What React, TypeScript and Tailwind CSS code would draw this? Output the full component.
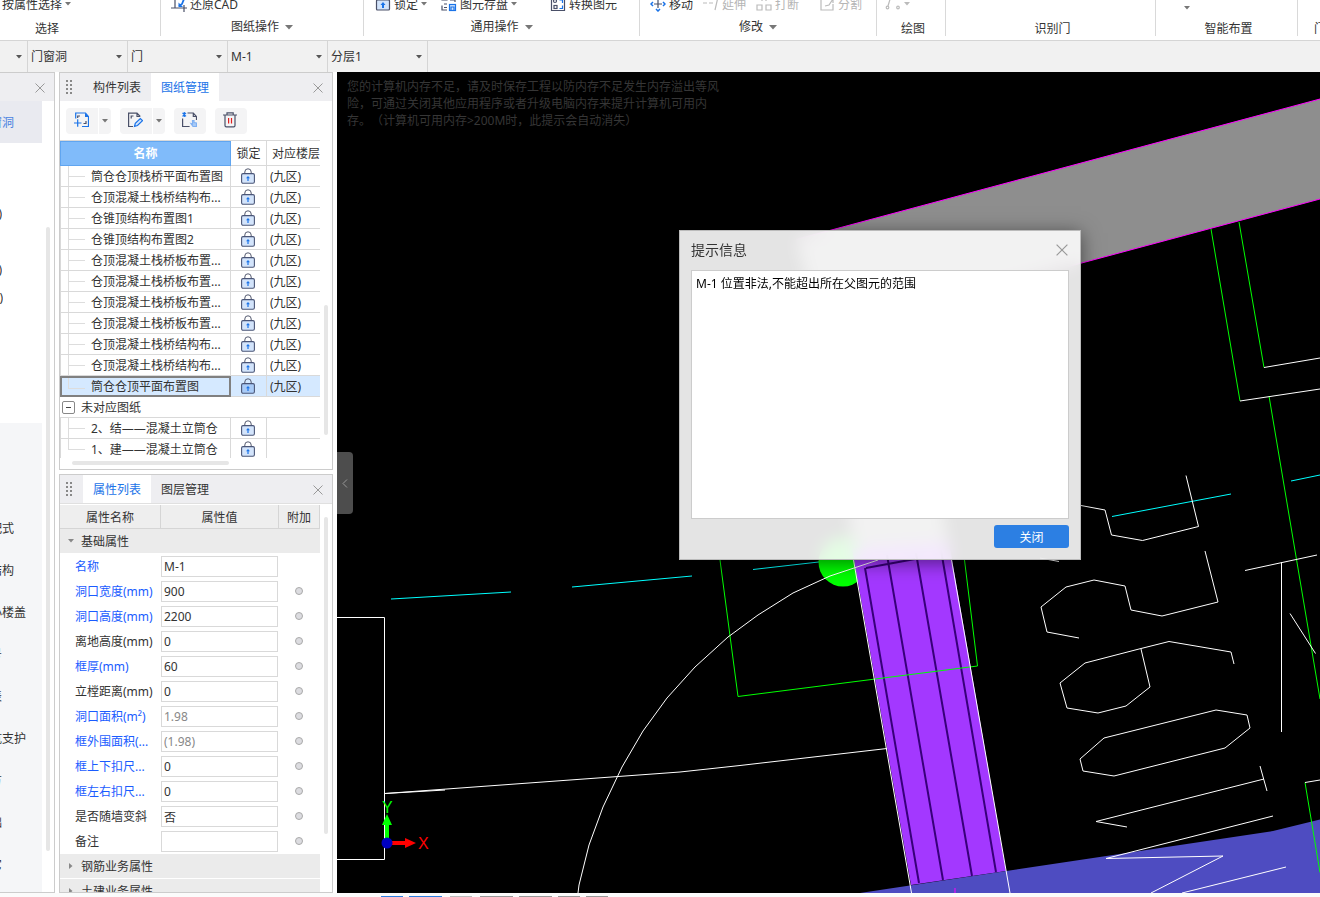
import type { ReactNode } from 'react'

const drawings = [
  { name: '筒仓仓顶栈桥平面布置图' },
  { name: '仓顶混凝土栈桥结构布...' },
  { name: '仓锥顶结构布置图1' },
  { name: '仓锥顶结构布置图2' },
  { name: '仓顶混凝土栈桥板布置...' },
  { name: '仓顶混凝土栈桥板布置...' },
  { name: '仓顶混凝土栈桥板布置...' },
  { name: '仓顶混凝土栈桥板布置...' },
  { name: '仓顶混凝土栈桥结构布...' },
  { name: '仓顶混凝土栈桥结构布...' },
  { name: '筒仓仓顶平面布置图', selected: true, last: true },
]

const unmatched = [
  { name: '2、结——混凝土立筒仓' },
  { name: '1、建——混凝土立筒仓', last: true },
]

const properties = [
  { label: '名称', value: 'M-1', blue: true, noExtra: true },
  { label: '洞口宽度(mm)', value: '900', blue: true },
  { label: '洞口高度(mm)', value: '2200', blue: true },
  { label: '离地高度(mm)', value: '0' },
  { label: '框厚(mm)', value: '60', blue: true },
  { label: '立樘距离(mm)', value: '0' },
  { label: '洞口面积(m²)', value: '1.98', blue: true, readOnly: true },
  { label: '框外围面积(...', value: '(1.98)', blue: true, readOnly: true },
  { label: '框上下扣尺...', value: '0', blue: true },
  { label: '框左右扣尺...', value: '0', blue: true },
  { label: '是否随墙变斜', value: '否' },
  { label: '备注', value: '' },
]

const navGroups = [
  { label: '装配式', width: 'w-3.5' },
  { label: '结构', width: 'w-3.5' },
  { label: '小楼盖', width: 'w-6.5' },
  { label: '号', width: 'w-0.5' },
  { label: '表', width: 'w-0.5' },
  { label: '坑支护', width: 'w-6.5' },
  { label: '方', width: 'w-0.5' },
  { label: '础', width: 'w-0.5' },
  { label: '它', width: 'w-0.5' },
]

function Caret({ className = 'text-[#777]' }: { className?: string }) {
  return (
    <svg width="6" height="4" viewBox="0 0 6 4" className={`shrink-0 ${className}`}>
      <path d="M0 0h6L3 3.5z" fill="currentColor" />
    </svg>
  )
}

function CloseIcon({ size = 10 }: { size?: number }) {
  return (
    <svg width={size} height={size} viewBox="0 0 10 10" fill="none" stroke="#999">
      <path d="M.5.5l9 9M9.5.5l-9 9" />
    </svg>
  )
}

function Grip() {
  return (
    <svg width="7" height="15" viewBox="0 0 7 15" fill="#888" className="mx-[6px] shrink-0">
      {[0, 4, 8, 12].map((y) => (
        <g key={y}>
          <rect x="0" y={y} width="2" height="2" />
          <rect x="4" y={y} width="2" height="2" />
        </g>
      ))}
    </svg>
  )
}

function LockIcon({ tint = '#d3e4fb' }: { tint?: string }) {
  return (
    <svg width="14" height="16" viewBox="0 0 14 16" fill="none" className="ml-2.5 block">
      <path d="M3.8 5.5V4a3.2 3.2 0 0 1 6.4 0v1.5" stroke="#555b70" />
      <rect x=".6" y="5.6" width="12.8" height="9.6" rx="1.4" fill={tint} stroke="#4a5577" strokeWidth="1.1" />
      <path d="M7 8l2 2.2H7.6V13H6.4v-2.8H5z" fill="#1a73e8" />
    </svg>
  )
}

function Icon({ children, muted }: { children: ReactNode; muted?: boolean }) {
  return (
    <svg
      width="16"
      height="16"
      viewBox="0 0 16 16"
      fill="none"
      stroke={muted ? '#bbb' : '#4a5068'}
      strokeWidth="1.2"
      className="shrink-0"
    >
      {children}
    </svg>
  )
}

function Tool({
  icon,
  label,
  caret,
  muted,
}: {
  icon?: ReactNode
  label?: string
  caret?: boolean
  muted?: boolean
}) {
  return (
    <button
      type="button"
      className={`flex h-6 shrink-0 items-center gap-[3px] whitespace-nowrap ${muted ? 'text-[#b5b5b5]' : ''}`}
    >
      {icon && <Icon muted={muted}>{icon}</Icon>}
      {label && <span className="pt-px">{label}</span>}
      {caret && <Caret className={muted ? 'text-[#bbb]' : 'text-[#777]'} />}
    </button>
  )
}

function RibbonGroup({
  title,
  menu,
  className,
  titleClass = '',
  children,
}: {
  title: string
  menu?: boolean
  className: string
  titleClass?: string
  children?: ReactNode
}) {
  return (
    <section className={`flex h-9 shrink-0 flex-col justify-end overflow-hidden border-r border-[#d9d9d9] ${className}`}>
      <div className="flex h-6 shrink-0 items-center">{children}</div>
      <div
        className={`flex h-5 shrink-0 items-center justify-center gap-1.5 whitespace-nowrap ${
          menu ? 'pt-0.5' : 'pt-1.5'
        } ${titleClass}`}
      >
        {title}
        {menu && (
          <svg width="8" height="5" viewBox="0 0 8 5" fill="#777">
            <path d="M0 0h8L4 4.5z" />
          </svg>
        )}
      </div>
    </section>
  )
}

function Ribbon() {
  return (
    <header className="flex h-[41px] shrink-0 overflow-hidden border-b border-[#d5d5d5] bg-white">
      <RibbonGroup title="选择" className="w-[161px] pl-0.5" titleClass="pr-[68px]">
        <Tool label="按属性选择" caret />
      </RibbonGroup>
      <RibbonGroup title="图纸操作" menu className="w-[203px] [&>div:first-child]:pl-2.5">
        <Tool
          label="还原CAD"
          icon={
            <>
              <path d="M4 0v12h12M0 12h4M13 9v7" />
              <path d="M8 10l3-2 2-5" stroke="#1a73e8" strokeWidth="1.8" />
              <path d="M7.500 6.500V11H12z" fill="#1a73e8" stroke="none" />
            </>
          }
        />
      </RibbonGroup>
      <RibbonGroup title="通用操作" menu className="w-[276px] [&>div:first-child]:pl-[11px]">
        <Tool
          label="锁定"
          caret
          icon={
            <>
              <rect x="1.500" y="4" width="13" height="10" rx="1" fill="#d3e4fb" />
              <path d="M8 6l2.500 3H9v3H7V9H5.500z" fill="#1a73e8" stroke="none" />
            </>
          }
        />
        <div className="w-3.5" />
        <Tool
          label="图元存盘"
          caret
          icon={
            <>
              <path d="M1 0v4h5V0M3 8h3M1 9.500V14h5M3 11.500h3M9 4h5v2" />
              <rect x="8.500" y="8.500" width="6" height="6" fill="#d3e4fb" stroke="#1a73e8" />
              <path d="M10 14v-3h3v3" stroke="#1a73e8" />
            </>
          }
        />
        <div className="w-[33px]" />
        <Tool
          label="转换图元"
          icon={
            <>
              <path d="M1.500 0v14.500h13V0" />
              <circle cx="5" cy="5" r="1.500" />
              <rect x="4" y="9.500" width="3" height="3" />
              <path d="M9.500 4h3v3M12.500 9.500v3h-3" stroke="#1a73e8" />
            </>
          }
        />
      </RibbonGroup>
      <RibbonGroup title="修改" menu className="w-[237px] [&>div:first-child]:pl-2.5">
        <Tool
          label="移动"
          icon={
            <>
              <path d="M8 4v8M4 8h8" />
              <path d="M6 3l2-2 2 2M6 13l2 2 2-2M3 6L1 8l2 2M13 6l2 2-2 2" stroke="#1a73e8" strokeWidth="1.500" />
            </>
          }
        />
        <div className="w-2.5" />
        <Tool label="延伸" muted icon={<path d="M0 7h4M6 7h4M15 1l-3 13" />} />
        <div className="w-2.5" />
        <Tool
          label="打断"
          muted
          icon={<path d="M1 2h5M10 2h5M1 9h5v5H1zM10 9h5v5h-5zM6 2v3M10 2v3" />}
        />
        <div className="w-5" />
        <Tool label="分割" muted icon={<path d="M8 3H2v11h12V8M6 10l4-1 4-6M10 3h4v4" />} />
      </RibbonGroup>
      <RibbonGroup title="绘图" className="w-[69px] [&>div:first-child]:pl-2" titleClass="pl-1">
        <Tool
          muted
          caret
          icon={
            <>
              <path d="M6 0L3 10" />
              <circle cx="2.500" cy="11.500" r="1.300" />
              <circle cx="13" cy="11.500" r="1.300" />
            </>
          }
        />
      </RibbonGroup>
      <RibbonGroup title="识别门" className="w-[210px]" titleClass="pl-1" />
      <RibbonGroup title="智能布置" className="w-[142px] [&>div:first-child]:pt-2 [&>div:first-child]:pl-7" titleClass="pl-1">
        <Tool caret />
      </RibbonGroup>
      <RibbonGroup title="门" className="w-12 grow" titleClass="justify-start pl-4" />
    </header>
  )
}

function BarSelect({ label, value, className = 'w-[100px]' }: { label: string; value: string; className?: string }) {
  return (
    <div className={`relative h-full border-r border-[#d5d5d5] ${className}`}>
      <select aria-label={label} className="h-full w-full appearance-none bg-transparent pl-[3px] outline-none">
        <option>{value}</option>
      </select>
      <Caret className="pointer-events-none absolute top-[14px] right-[5px] text-[#555]" />
    </div>
  )
}

function SelectorBar() {
  return (
    <div className="flex h-[31px] shrink-0 items-center bg-[#f1f1f1]">
      <BarSelect label="楼层" value="" className="w-7" />
      <BarSelect label="构件类别" value="门窗洞" />
      <BarSelect label="构件类型" value="门" />
      <BarSelect label="构件" value="M-1" />
      <BarSelect label="分层" value="分层1" />
    </div>
  )
}

function NavPanel() {
  return (
    <nav className="flex w-[55px] shrink-0 flex-col overflow-hidden border border-l-0 border-[#ccc] bg-white">
      <div className="flex h-7 shrink-0 items-center justify-end bg-[#eeeef1] pt-px pr-[9px]">
        <button type="button" aria-label="关闭导航">
          <CloseIcon />
        </button>
      </div>
      <div className="flex min-h-0 flex-1">
        <div className="flex w-[42px] shrink-0 flex-col">
          <a href="#door" className="flex h-[42px] shrink-0 items-center bg-[#e9eaf0] pt-0.5 text-[#4a83e0]">
            <span className="flex w-3.5 justify-end overflow-hidden whitespace-nowrap">门窗洞</span>
          </a>
          <ul className="h-[280px] shrink-0 pt-[57px] text-[#333]">
            {['w-0.5', '', 'w-0.5', 'w-[3px]'].map((w, i) => (
              <li key={i} className="flex h-7 items-center">
                {w && <span className={`flex justify-end overflow-hidden ${w}`}>)</span>}
              </li>
            ))}
          </ul>
          <ul className="flex-1 bg-[#f5f6f8] pt-[85px]">
            {navGroups.map((g) => (
              <li key={g.label} className="flex h-[42px] items-center">
                <a href="#group" className={`flex justify-end overflow-hidden whitespace-nowrap ${g.width}`}>
                  {g.label}
                </a>
              </li>
            ))}
          </ul>
        </div>
        <div className="ml-1 mt-[126px] h-[624px] w-1 rounded-full bg-[#e6e6e6]" />
      </div>
    </nav>
  )
}

function PanelTabs({ tabs, active }: { tabs: string[]; active: number }) {
  return (
    <div className="flex h-7 shrink-0 items-center bg-[#eeeef1]">
      <Grip />
      <div className="flex h-full flex-1 pl-1" role="tablist">
        {tabs.map((t, i) => (
          <button
            key={t}
            type="button"
            role="tab"
            aria-selected={i === active}
            className={`h-full w-[68px] pt-0.5 ${i === active ? 'bg-white text-[#1a73e8]' : ''}`}
          >
            {t}
          </button>
        ))}
      </div>
      <button type="button" aria-label="关闭面板" className="mt-px mr-[9px]">
        <CloseIcon />
      </button>
    </div>
  )
}

function ToolButton({ label, split, children }: { label: string; split?: boolean; children: ReactNode }) {
  return (
    <div className="flex h-[26px] gap-px">
      <button
        type="button"
        aria-label={label}
        className={`flex w-8 items-center justify-center bg-[#f4f4f5] pr-0.5 pb-px ${split ? 'rounded-l' : 'rounded'}`}
      >
        <Icon>{children}</Icon>
      </button>
      {split && (
        <button
          type="button"
          aria-label={`${label}菜单`}
          className="flex w-3 items-center justify-center rounded-r bg-[#f4f4f5]"
        >
          <Caret />
        </button>
      )}
    </div>
  )
}

function DrawingRow({ name, floor, selected, last }: { name: string; floor?: string; selected?: boolean; last?: boolean }) {
  return (
    <tr className={selected ? 'bg-[#d5e9ff]' : ''}>
      <td
        className={`h-[21px] p-0 ${
          selected ? 'border-2 border-[#808080]' : 'border-r border-b border-l border-[#d9d9d9]'
        }`}
      >
        <div
          className={`flex items-center whitespace-nowrap ${selected ? 'h-[17px] pl-1.5 leading-[17px]' : 'h-5 pl-[7px]'}`}
        >
          <span className={`flex w-[17px] shrink-0 flex-col self-stretch ${last ? '' : 'border-l border-[#ddd]'}`}>
            <span className={`h-[11px] border-b border-[#ddd] ${last ? 'border-l' : ''}`} />
          </span>
          <span className={selected ? 'pl-1.5' : 'pt-0.5 pl-1.5'}>{name}</span>
        </div>
      </td>
      <td className="border-r border-b border-[#d9d9d9] px-0 pt-0 pb-px">
        <LockIcon tint={selected ? '#a9cbf7' : '#d3e4fb'} />
      </td>
      <td className="border-b border-[#d9d9d9] pt-0.5 pr-0 pb-0 pl-[3px]">{floor}</td>
    </tr>
  )
}

function DrawingPanel() {
  return (
    <section className="flex h-[398px] shrink-0 flex-col border border-[#ccc] bg-white">
      <PanelTabs tabs={['构件列表', '图纸管理']} active={1} />
      <div className="flex h-[39px] shrink-0 items-center gap-[9px] pl-1.5">
        <ToolButton label="添加图纸" split>
          <path d="M2.700 6.500V1h9.800l3 3.500v10H9M1 11h7.500M4.700 7.300v7.400" stroke="#1a73e8" />
          <path d="M4.700 6V4H7M13 9v2.500h-2.500" />
          <path d="M12 1l4 4h-4z" fill="#1a73e8" stroke="none" />
        </ToolButton>
        <ToolButton label="编辑图纸" split>
          <path d="M6 14.500H1.600V1.200H10l3.200 3.300M4.200 6.500V4h2.300M10 1.200v3.300h3.200" />
          <path d="M7.500 14.300l.8-3 5-4.800 2.200 2.200-5 4.800z" fill="#d3e4fb" stroke="#1a73e8" />
        </ToolButton>
        <ToolButton label="定位图纸">
          <path d="M1.600 6.500v8h7M6.500 1h5.800l3.200 3.500V8M12.300 1v3.500h3.200" />
          <path d="M1.500.800l3.500 3.500M5 .800L1.500 4.300M3.300 0v5" stroke="#1a73e8" />
          <path d="M11.500 8.500v3.500l-1.500-.5 2 3h3.500v-3.500l-2.500-.5v-2z" fill="#a9cbf7" stroke="#7fb0f2" />
        </ToolButton>
        <ToolButton label="删除">
          <path d="M1 3h14M5 3V.800h6.200V3M3 3v10.500q0 1.300 1.300 1.300h7.400q1.300 0 1.300-1.300V3" />
          <path d="M6.600 6v5.500M9.500 6v5.500" stroke="#e02020" />
        </ToolButton>
      </div>
      <div className="flex min-h-0 flex-1">
        <div className="flex w-[260px] shrink-0 flex-col">
          <div className="h-[318px] overflow-hidden border-t border-[#d9d9d9]">
            <table className="w-full table-fixed border-separate border-spacing-0">
              <colgroup>
                <col className="w-[171px]" />
                <col className="w-9" />
                <col />
              </colgroup>
              <thead>
                <tr>
                  <th className="h-[25px] border border-[#60a5f0] bg-[#80bbfa] p-0 text-white">名称</th>
                  <th className="border-r border-b border-[#d9d9d9] px-0 pt-0.5 pb-0 font-normal">锁定</th>
                  <th className="overflow-hidden border-b border-[#d9d9d9] pt-0.5 pr-0 pb-0 pl-[5px] text-left font-normal whitespace-nowrap">
                    对应楼层
                  </th>
                </tr>
              </thead>
              <tbody>
                {drawings.map((d, i) => (
                  <DrawingRow key={i} {...d} floor="(九区)" />
                ))}
                <tr>
                  <td colSpan={3} className="h-[21px] border-b border-[#d9d9d9] p-0">
                    <div className="flex h-5 items-center gap-1.5 pl-0.5">
                      <button
                        type="button"
                        aria-label="折叠"
                        className="flex h-[13px] w-[13px] items-center justify-center rounded-xs border border-[#888] bg-white"
                      >
                        <span className="h-px w-[5px] bg-[#444]" />
                      </button>
                      <span className="pt-0.5">未对应图纸</span>
                    </div>
                  </td>
                </tr>
                {unmatched.map((d) => (
                  <DrawingRow key={d.name} {...d} />
                ))}
              </tbody>
            </table>
          </div>
          <div className="mt-[3px] ml-3 h-1 w-[157px] rounded-full bg-[#e6e6e6]" />
        </div>
        <div className="mt-[165px] ml-1 h-[130px] w-1 rounded-full bg-[#e6e6e6]" />
      </div>
    </section>
  )
}

function GroupHeading({ title, open }: { title: string; open?: boolean }) {
  return (
    <tr>
      <th colSpan={3} className="h-[25px] border-b border-white bg-[#ebebeb] p-0 text-left font-normal">
        <button type="button" className="flex h-6 items-center gap-[7px] pl-2">
          <Caret className={open ? 'text-[#888]' : '-rotate-90 text-[#888]'} />
          <span className="pt-0.5">{title}</span>
        </button>
      </th>
    </tr>
  )
}

function PropertyPanel() {
  return (
    <section className="flex min-h-0 flex-1 flex-col overflow-hidden border border-[#ccc] bg-white">
      <PanelTabs tabs={['属性列表', '图层管理']} active={0} />
      <div className="flex min-h-0 flex-1 overflow-hidden border-t border-[#e0e0e0] pt-px">
        <div className="w-[260px] shrink-0">
          <table className="w-full table-fixed border-separate border-spacing-0">
            <colgroup>
              <col className="w-[101px]" />
              <col className="w-[118px]" />
              <col />
            </colgroup>
            <thead>
              <tr className="bg-[#eee]">
                <th className="h-6 border-r border-b border-[#d5d5d5] px-0 pt-0.5 pb-0 font-normal">属性名称</th>
                <th className="border-r border-b border-[#d5d5d5] px-0 pt-0.5 pb-0 font-normal">属性值</th>
                <th className="border-r border-b border-[#d5d5d5] px-0 pt-0.5 pb-0 font-normal">附加</th>
              </tr>
            </thead>
            <tbody>
              <GroupHeading title="基础属性" open />
              {properties.map((p, i) => (
                <tr key={p.label}>
                  <td className="h-[25px] py-0 pr-0 pl-[15px]">
                    <label htmlFor={`prop-${i}`} className={`whitespace-nowrap ${p.blue ? 'text-[#1a5cff]' : ''}`}>
                      {p.label}
                    </label>
                  </td>
                  <td className="p-0">
                    <input
                      id={`prop-${i}`}
                      defaultValue={p.value}
                      readOnly={p.readOnly}
                      className={`block h-[21px] w-[117px] border border-[#d9d9d9] bg-white px-0.5 outline-none ${
                        p.readOnly ? 'text-[#888]' : ''
                      }`}
                    />
                  </td>
                  <td className="px-0 pt-0 pb-0.5">
                    {!p.noExtra && (
                      <input
                        type="checkbox"
                        aria-label={`${p.label} 附加`}
                        className="ml-4 block h-2 w-2 appearance-none rounded-full border border-[#aaa] bg-[#dcdce0]"
                      />
                    )}
                  </td>
                </tr>
              ))}
              <GroupHeading title="钢筋业务属性" />
              <GroupHeading title="土建业务属性" />
            </tbody>
          </table>
        </div>
        <div className="mt-3 ml-1 h-[317px] w-1 rounded-full bg-[#e6e6e6]" />
      </div>
    </section>
  )
}

function ModelDrawing() {
  return (
    <svg className="absolute inset-0 h-full w-full" fill="none">
      <g transform="translate(-337 -72)">
        {/* slab */}
        <path d="M1320 99L796 239.500 821 333 1320 199z" fill="#8e8e8e" />
        <path d="M1320 99L796 239.500M821 333L1320 199" stroke="#f0f" />
        <path d="M845 480l92-8 12 76-95 12z" fill="#8e8e8e" />

        {/* grid axes */}
        <path
          d="M391 599l120-7M572 587l120-11M753 569.500l70-8M1112 516.500l119-22.500M1291 481l29-6"
          stroke="#0ff"
        />

        {/* wall with door opening */}
        <circle cx="843" cy="562" r="24.500" fill="#0f0" />
        <path d="M852 548l97-6 57 329-95 14z" fill="#a338ff" />
        <path
          d="M865 568l54 315M887 555l56 325M916 553l56 323M941 550l55 322M866 568l49-9"
          stroke="#38007a"
          strokeWidth="2"
        />
        <path d="M860 893L1273 831l47-11.500V893z" fill="#4e4cc1" />
        <path d="M955 888v5" stroke="#f0f" />

        {/* boundaries */}
        <path
          d="M720 560l18 136.500L977.500 666 964.500 560M1211 229l29 172M1239 222l25 145.500M1269 396l51 303M1305 782.500l15 90"
          stroke="#0f0"
        />

        <g stroke="#fff">
          <path d="M337 617.500h47.500v242H337" />
          <path d="M385 793.500L680 772l60-6.500 147-17M385 793.500l60-3.500" />
          <path d="M578 893l1-8 10-40 14-38 19-40 21-36 24-33 28-31 33-30 30-22 35-22 37-17 48-16" />
          <path d="M853.500 560l58 333M951.500 560l58.500 333" />
          <path d="M1264 367.500l56-9.500M1240 401l80-12M1305 782.500l15-2.500" />
          <path d="M1245 570.500l72-15.500M1281.500 562v170M1290 613.500l25.500 40" />
          <path d="M1040 558l19 3.500M1081 505.500l24 4.500 6.500 25 31 5.500 56-14-12.500-51" />
          <path d="M1079 638l-32-6-6-25 25-20 28-7 31 6 6 24 31 6 56-14-13-51" />
          <path d="M1234 664l-3-12-62-10.500-28 7-56 14.500-25 20 7 25 31 5 28-7 24-19-9-38" />
          <path d="M1216 710l31 5 3 13-25 20-111 28-31-5-3-12 24-21z" />
          <path d="M1260 766l7 25M1264 779L1096 821.500l31 5.500" />
          <path d="M1273 816l-167 42.500 117-2.500-72 37M1286 867l-104 26" />
        </g>

        {/* coordinate axes */}
        <path d="M385 838v-13h-3l5-11 5 11h-3v13z" fill="#0f0" />
        <path d="M392 841h13v-3l11 5-11 5v-3h-13z" fill="#f00" />
        <circle cx="387" cy="843" r="5.500" fill="#0000c0" />
        <text x="382" y="813" fill="#0f0" fontSize="16" fontFamily="Liberation Sans, sans-serif">
          Y
        </text>
        <text x="418" y="849" fill="#f00" fontSize="16" fontFamily="Liberation Sans, sans-serif">
          X
        </text>
      </g>
    </svg>
  )
}

function MessageDialog() {
  return (
    <div
      role="dialog"
      aria-labelledby="dialog-title"
      className="absolute top-[158px] left-[342px] flex w-[402px] flex-col border border-[#bbb] bg-[#fdfdfd]/90 px-[11px] pb-[11px] shadow-[0_3px_18px_rgba(0,0,0,0.5)] backdrop-blur-sm"
    >
      <div className="flex h-[39px] items-center justify-between pb-0.5">
        <h2 id="dialog-title" className="text-[14px] text-[#333]">
          提示信息
        </h2>
        <button type="button" aria-label="关闭窗口" className="mr-px">
          <CloseIcon size={12} />
        </button>
      </div>
      <textarea
        readOnly
        aria-label="提示内容"
        defaultValue="M-1 位置非法,不能超出所在父图元的范围"
        className="block h-[249px] w-full resize-none border border-[#ccc] bg-white p-1 leading-[18px] text-black outline-none"
      />
      <button type="button" className="mt-1.5 h-[23px] w-[75px] self-end rounded-[3px] bg-[#2c7fe3] pt-0.5 text-white">
        关闭
      </button>
    </div>
  )
}

function Viewport() {
  return (
    <main className="relative min-w-0 flex-1 overflow-hidden bg-black">
      <ModelDrawing />
      <p className="relative pt-1.5 pl-2.5 leading-[17px] whitespace-nowrap text-[#363636] [text-spacing-trim:space-all]">
        您的计算机内存不足，请及时保存工程以防内存不足发生内存溢出等风
        <br />
        险，可通过关闭其他应用程序或者升级电脑内存来提升计算机可用内
        <br />
        存。（计算机可用内存&gt;200M时，此提示会自动消失）
      </p>
      <button
        type="button"
        aria-label="收起面板"
        className="absolute top-[380px] left-0 flex h-[62px] w-4 items-center justify-center rounded-r bg-[#4d4d4d]"
      >
        <svg width="6" height="9" viewBox="0 0 6 9" fill="none" stroke="#999">
          <path d="M5 .5l-4 4 4 4" />
        </svg>
      </button>
      <MessageDialog />
    </main>
  )
}

function StatusBar() {
  return (
    <footer className="flex h-1 shrink-0 items-end gap-1.5 overflow-hidden bg-[#fbfbfb] pl-[381px]">
      <span className="h-px w-[22px] bg-[#2c7fe3]" />
      <span className="h-px w-[33px] bg-[#2c7fe3]" />
      <span className="ml-0.5 h-px w-[22px] bg-[#bbb]" />
      <span className="ml-0.5 h-px w-[33px] bg-[#999]" />
      <span className="h-px w-[33px] bg-[#999]" />
      <span className="h-px w-[22px] bg-[#999]" />
      <span className="h-px w-[22px] bg-[#999]" />
    </footer>
  )
}

export default function App() {
  return (
    <div className="flex h-screen flex-col overflow-hidden bg-white font-['Noto_Sans','Noto_Sans_CJK_SC',sans-serif] text-[12px] leading-[18px] text-[#333]">
      <Ribbon />
      <SelectorBar />
      <div className="flex min-h-0 flex-1">
        <NavPanel />
        <aside className="mx-1 flex w-[274px] shrink-0 flex-col gap-1">
          <DrawingPanel />
          <PropertyPanel />
        </aside>
        <Viewport />
      </div>
      <StatusBar />
    </div>
  )
}
